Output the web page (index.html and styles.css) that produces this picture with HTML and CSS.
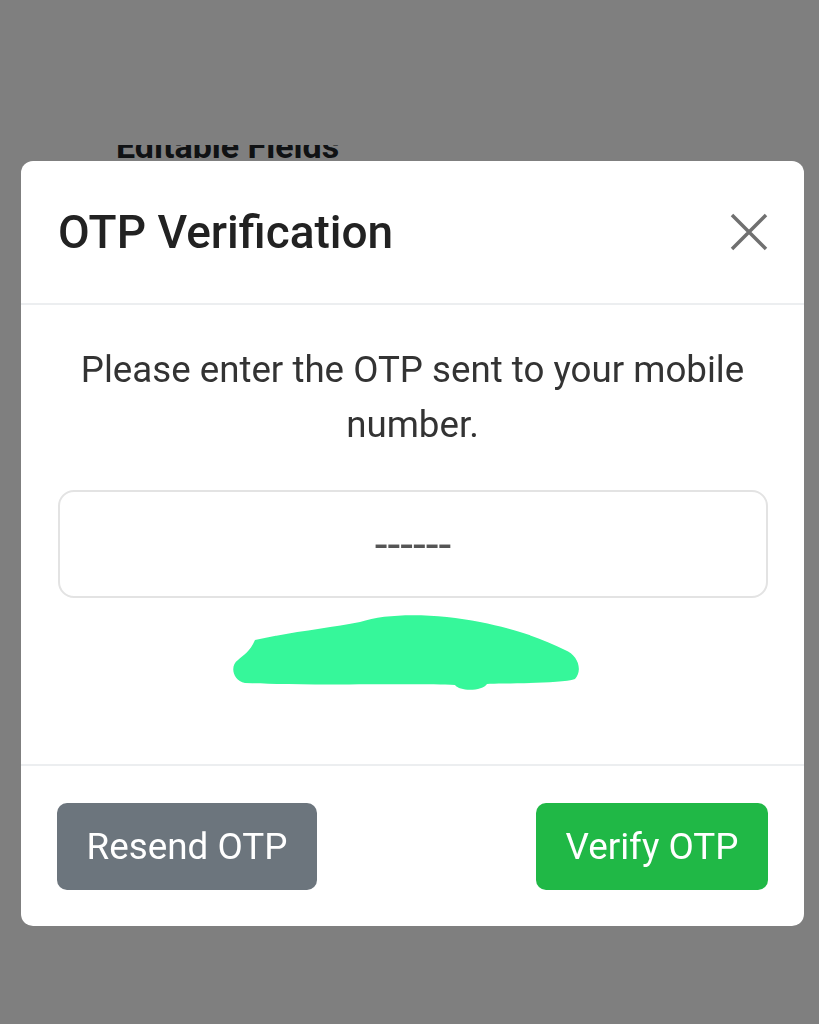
FILE: index.html
```html
<!DOCTYPE html>
<html lang="en">
<head>
    <meta charset="UTF-8">
    <meta name="viewport" content="width=device-width, initial-scale=1.0">
    <title>OTP Verification</title>
    <link rel="stylesheet" href="styles.css">
</head>
<body>
    <div class="page">
        <div class="page-title-clip">
            <h2 class="page-title">Editable Fields</h2>
        </div>
    </div>
    <div class="overlay"></div>
    <div class="modal">
        <div class="modal-header">
            <h1 class="modal-title">OTP Verification</h1>
            <button class="close" aria-label="Close">
                <svg width="38" height="38" viewBox="0 0 38 38">
                    <path d="M2 2 L36 36 M36 2 L2 36" stroke="#707070" stroke-width="3.5" fill="none"/>
                </svg>
            </button>
        </div>
        <div class="modal-body">
            <p class="message">Please enter the OTP sent to your mobile number.</p>
            <input type="text" class="otp-input" placeholder="------" maxlength="6">
            <svg class="scribble" width="352" height="82" viewBox="230 612 352 82">
                <path d="M255 640 C290 632 330 628 360 622 C390 612 440 614 480 622 C520 630 545 640 565 650 C578 655 583 670 575 679 C560 684 500 683 487 684 C483 691 460 692 455 685 C420 683 300 686 245 683 C232 680 230 665 238 660 C243 655 250 652 255 640 Z" fill="#36f79a"/>
            </svg>
        </div>
        <div class="modal-footer">
            <button class="btn resend">Resend OTP</button>
            <button class="btn verify">Verify OTP</button>
        </div>
    </div>
</body>
</html>
```

FILE: styles.css
```css
body {
    margin: 0;
    height: 1024px;
    background: #fff;
    font-family: Roboto, "Noto Sans", Arial, sans-serif;
    overflow: hidden;
}
.page {
    padding: 145px 0 0 116px;
}
.page-title-clip {
    height: 16px;
    overflow: hidden;
}
.page-title {
    margin: -19px 0 0;
    font-size: 34px;
    line-height: 40px;
    font-weight: 700;
    color: #212529;
}
.overlay {
    position: fixed;
    inset: 0;
    background: rgba(0, 0, 0, 0.5);
}
.modal {
    position: absolute;
    top: 161px;
    left: 21px;
    width: 783px;
    background: #fff;
    border-radius: 12px;
    overflow: hidden;
}
.modal-header {
    display: flex;
    justify-content: space-between;
    align-items: center;
    height: 142px;
    padding: 0 36px 0 37px;
    border-bottom: 2px solid #eceef0;
}
.modal-title {
    margin: 0;
    font-size: 46px;
    font-weight: 500;
    color: #222;
}
.close {
    border: none;
    background: none;
    padding: 0;
    display: flex;
}
.modal-body {
    padding: 37px 37px 70px;
}
.message {
    margin: 0;
    text-align: center;
    font-size: 36.7px;
    line-height: 55px;
    color: #333;
}
.otp-input {
    display: block;
    box-sizing: border-box;
    width: 710px;
    height: 108px;
    margin: 38px 0 0;
    border: 2px solid #e3e3e3;
    border-radius: 16px;
    text-align: center;
    font-family: inherit;
    font-size: 46px;
}
.otp-input::placeholder {
    color: #555;
}
.scribble {
    display: block;
    margin: 14px 0 0 172px;
}
.modal-footer {
    display: flex;
    justify-content: space-between;
    padding: 37px 36px 36px;
    border-top: 2px solid #eceef0;
}
.btn {
    height: 87px;
    border: none;
    border-radius: 10px;
    color: #fff;
    font-family: inherit;
    font-size: 36.8px;
    padding: 0;
}
.resend {
    width: 260px;
    background: #6c757d;
}
.verify {
    width: 232px;
    background: #20b846;
}
```
